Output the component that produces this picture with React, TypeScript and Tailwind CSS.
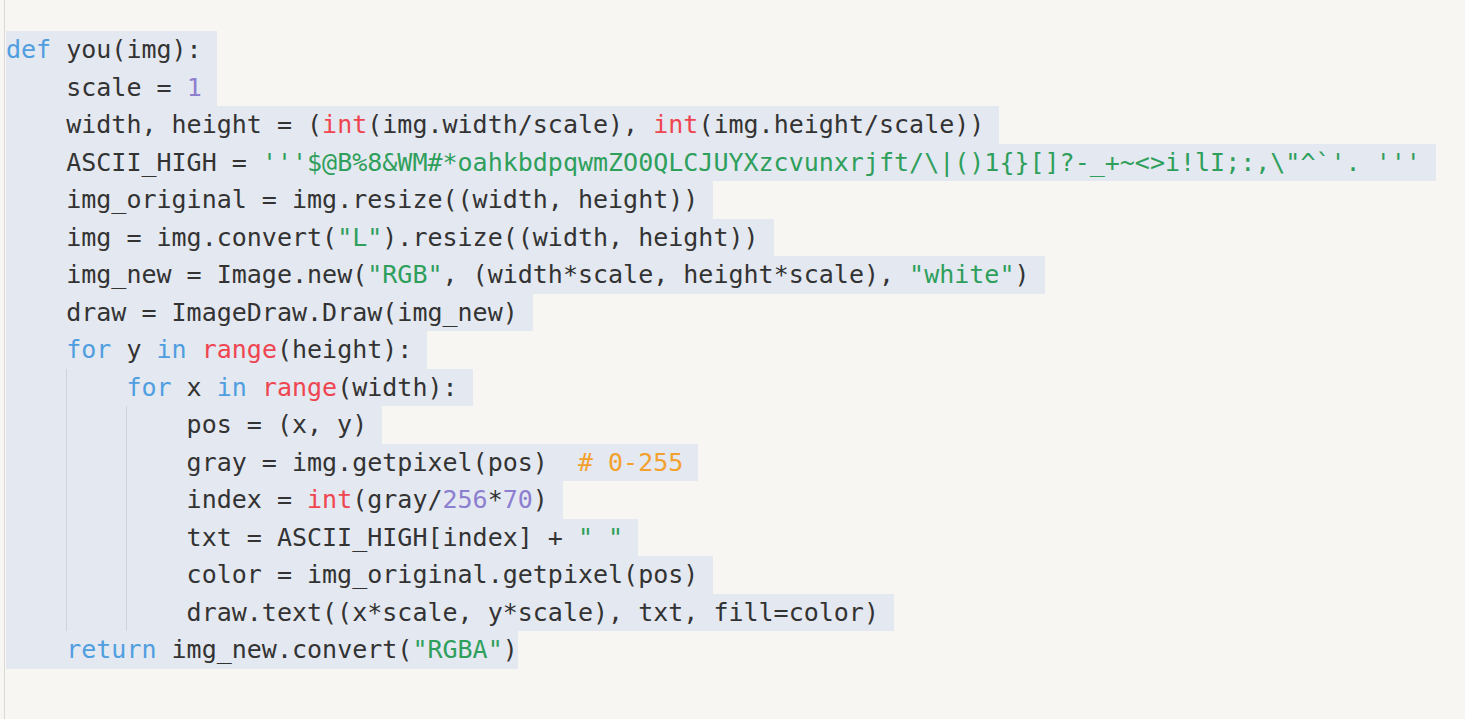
type Tok = [string, string?];

const K = "text-[#4f9ee0]"; // keywords
const B = "text-[#ef4551]"; // builtins
const N = "text-[#8c7fd0]"; // numbers
const S = "text-[#2f9f5c]"; // strings
const C = "text-[#f3a12e]"; // comments

const lines: { indent: number; toks: Tok[] }[] = [
  { indent: 0, toks: [["def", K], [" you(img):"]] },
  { indent: 1, toks: [["scale = "], ["1", N]] },
  {
    indent: 1,
    toks: [
      ["width, height = ("],
      ["int", B],
      ["(img.width/scale), "],
      ["int", B],
      ["(img.height/scale))"],
    ],
  },
  {
    indent: 1,
    toks: [
      ["ASCII_HIGH = "],
      ["'''$@B%8&WM#*oahkbdpqwmZO0QLCJUYXzcvunxrjft/\\|()1{}[]?-_+~<>i!lI;:,\\\"^`'. '''", S],
    ],
  },
  { indent: 1, toks: [["img_original = img.resize((width, height))"]] },
  {
    indent: 1,
    toks: [["img = img.convert("], ['"L"', S], [").resize((width, height))"]],
  },
  {
    indent: 1,
    toks: [
      ["img_new = Image.new("],
      ['"RGB"', S],
      [", (width*scale, height*scale), "],
      ['"white"', S],
      [")"],
    ],
  },
  { indent: 1, toks: [["draw = ImageDraw.Draw(img_new)"]] },
  {
    indent: 1,
    toks: [["for", K], [" y "], ["in", K], [" "], ["range", B], ["(height):"]],
  },
  {
    indent: 2,
    toks: [["for", K], [" x "], ["in", K], [" "], ["range", B], ["(width):"]],
  },
  { indent: 3, toks: [["pos = (x, y)"]] },
  { indent: 3, toks: [["gray = img.getpixel(pos)  "], ["# 0-255", C]] },
  {
    indent: 3,
    toks: [["index = "], ["int", B], ["(gray/"], ["256", N], ["*"], ["70", N], [")"]],
  },
  { indent: 3, toks: [["txt = ASCII_HIGH[index] + "], ['" "', S]] },
  { indent: 3, toks: [["color = img_original.getpixel(pos)"]] },
  { indent: 3, toks: [["draw.text((x*scale, y*scale), txt, fill=color)"]] },
  {
    indent: 1,
    toks: [["return", K], [" img_new.convert("], ['"RGBA"', S], [")"]],
  },
];

function CodeLine({
  indent,
  toks,
  last,
}: {
  indent: number;
  toks: Tok[];
  last: boolean;
}) {
  return (
    <div className="flex h-[37.5px]">
      <div className="flex items-stretch bg-[#e4e8f0]">
        {Array.from({ length: indent }).map((_, i) => (
          <div
            key={i}
            className={`w-[4ch] shrink-0 ${
              i > 0 ? "border-l border-[#cfd3da]" : ""
            }`}
          />
        ))}
        <div className={`flex items-center whitespace-pre ${last ? "" : "pr-[1ch]"}`}>
          {toks.map(([t, cls], i) => (
            <span key={i} className={cls ?? "text-[#333333]"}>
              {t}
            </span>
          ))}
        </div>
      </div>
    </div>
  );
}

export default function App() {
  return (
    <div className="h-[719px] w-[1465px] overflow-hidden bg-[#f7f6f2] pl-[4px]">
      <div
        className="h-full border-l border-[#d9d9d6] pl-[1px] pt-[31px] text-[25px] leading-[37.5px]"
        style={{ fontFamily: '"DejaVu Sans Mono", "Liberation Mono", monospace' }}
      >
        {lines.map((l, i) => (
          <CodeLine key={i} indent={l.indent} toks={l.toks} last={i === lines.length - 1} />
        ))}
      </div>
    </div>
  );
}
